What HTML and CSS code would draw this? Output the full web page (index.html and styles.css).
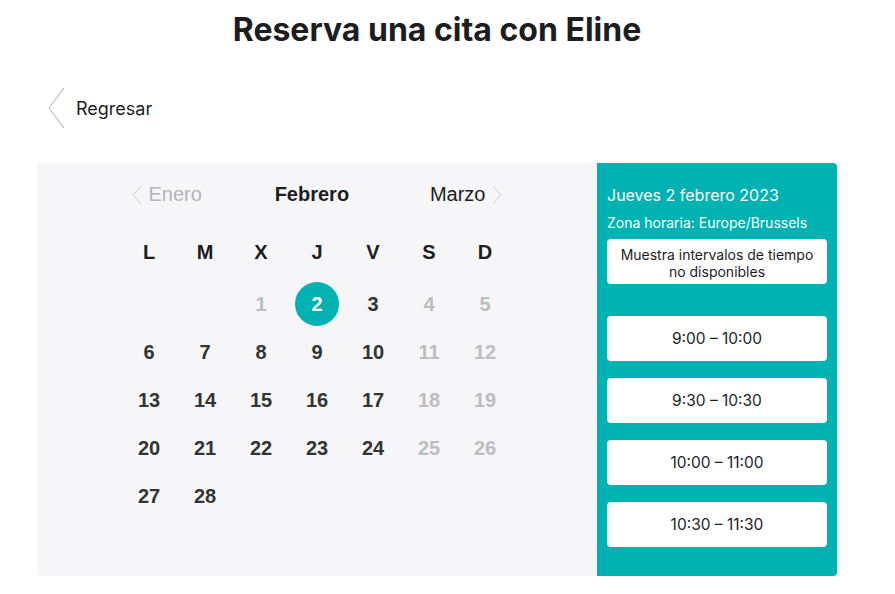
FILE: index.html
```html
<!DOCTYPE html>
<html lang="es">
<head>
    <meta charset="UTF-8">
    <meta name="viewport" content="width=device-width, initial-scale=1.0">
    <title>Reserva una cita con Eline</title>
    <link rel="stylesheet" href="styles.css">
</head>
<body>
    <div class="page">
        <h1>Reserva una cita con Eline</h1>

        <a href="#" class="back">
            <svg width="17" height="42" viewBox="0 0 17 42"><polyline points="16,1 1,21 16,41" fill="none" stroke="#aaa" stroke-width="1"/></svg>
            <span>Regresar</span>
        </a>

        <div class="booking">
            <div class="calendar">
                <div class="month-nav">
                    <a href="#" class="nav prev">
                        <svg width="10" height="20" viewBox="0 0 10 20"><polyline points="9,1 1,10 9,19" fill="none" stroke="#ccc" stroke-width="1"/></svg>
                        Enero
                    </a>
                    <span class="current">Febrero</span>
                    <a href="#" class="nav next">
                        Marzo
                        <svg width="10" height="20" viewBox="0 0 10 20"><polyline points="1,1 9,10 1,19" fill="none" stroke="#ccc" stroke-width="1"/></svg>
                    </a>
                </div>

                <div class="grid">
                    <div class="dow">L</div><div class="dow">M</div><div class="dow">X</div><div class="dow">J</div><div class="dow">V</div><div class="dow">S</div><div class="dow">D</div>

                    <div></div><div></div>
                    <div class="day off">1</div><div class="day selected"><span>2</span></div><div class="day">3</div><div class="day off">4</div><div class="day off">5</div>
                    <div class="day">6</div><div class="day">7</div><div class="day">8</div><div class="day">9</div><div class="day">10</div><div class="day off">11</div><div class="day off">12</div>
                    <div class="day">13</div><div class="day">14</div><div class="day">15</div><div class="day">16</div><div class="day">17</div><div class="day off">18</div><div class="day off">19</div>
                    <div class="day">20</div><div class="day">21</div><div class="day">22</div><div class="day">23</div><div class="day">24</div><div class="day off">25</div><div class="day off">26</div>
                    <div class="day">27</div><div class="day">28</div>
                </div>
            </div>

            <div class="slots">
                <div class="date-title">Jueves 2 febrero 2023</div>
                <div class="timezone">Zona horaria: Europe/Brussels</div>
                <button class="toggle">Muestra intervalos de tiempo no disponibles</button>

                <div class="slot-list">
                    <button class="slot">9:00 – 10:00</button>
                    <button class="slot">9:30 – 10:30</button>
                    <button class="slot">10:00 – 11:00</button>
                    <button class="slot">10:30 – 11:30</button>
                </div>
            </div>
        </div>
    </div>
</body>
</html>
```

FILE: styles.css
```css
body {
    margin: 0;
    font-family: Inter, "Noto Sans", sans-serif;
    color: #1d1d1f;
    background: #fff;
}
.page {
    width: 800px;
    margin-left: 37px;
}
h1 {
    margin: 12px 0 0;
    text-align: center;
    font-size: 32px;
    font-weight: 700;
    line-height: 36px;
    color: #1d1d1f;
}
.back {
    display: flex;
    align-items: center;
    gap: 11px;
    margin: 39px 0 0 11px;
    text-decoration: none;
    color: #1d1d1f;
    font-size: 18px;
    width: 140px;
}
.booking {
    display: flex;
    margin-top: 34px;
    height: 413px;
}
.calendar {
    flex: 1;
    background: #f6f6f8;
    border-radius: 4px 0 0 4px;
    font-family: "Liberation Sans", Arial, sans-serif;
    display: flex;
    flex-direction: column;
    align-items: center;
}
.month-nav {
    display: flex;
    justify-content: space-between;
    align-items: center;
    width: 371px;
    margin-top: 20px;
    font-size: 20px;
}
.nav {
    display: flex;
    align-items: center;
    gap: 7px;
    text-decoration: none;
}
.prev {
    color: #b5b5b8;
}
.next {
    color: #1d1d1f;
}
.current {
    font-weight: 700;
    color: #1d1d1f;
    margin-right: 8px;
}
.grid {
    display: grid;
    grid-template-columns: repeat(7, 56px);
    grid-auto-rows: 48px;
    margin-top: 26px;
    font-weight: 700;
    font-size: 20px;
}
.dow {
    display: flex;
    align-items: center;
    justify-content: center;
    color: #1d1d1f;
    height: 40px;
    margin-bottom: 8px;
}
.day {
    display: flex;
    align-items: center;
    justify-content: center;
    color: #333;
}
.day.off {
    color: #bdbdbf;
}
.day.selected span {
    width: 44px;
    height: 44px;
    border-radius: 50%;
    background: #00b3b2;
    color: #fff;
    display: flex;
    align-items: center;
    justify-content: center;
}
.slots {
    width: 220px;
    padding: 0 10px;
    background: #00b3b2;
    border-radius: 0 4px 4px 0;
    color: #fff;
}
.date-title {
    margin-top: 22px;
    font-size: 16px;
    line-height: 20px;
}
.timezone {
    margin-top: 9px;
    font-size: 14px;
    line-height: 18px;
}
button {
    display: block;
    width: 100%;
    border: none;
    border-radius: 4px;
    background: #fff;
    color: #1d1d1f;
    font-family: Inter, "Noto Sans", sans-serif;
    cursor: pointer;
}
.toggle {
    margin-top: 7px;
    height: 45px;
    font-size: 14px;
    line-height: 17px;
    padding: 2px 10px 0;
}
.slot-list {
    display: flex;
    flex-direction: column;
    gap: 17px;
    margin-top: 32px;
}
.slot {
    height: 45px;
    font-size: 15.5px;
}
```
